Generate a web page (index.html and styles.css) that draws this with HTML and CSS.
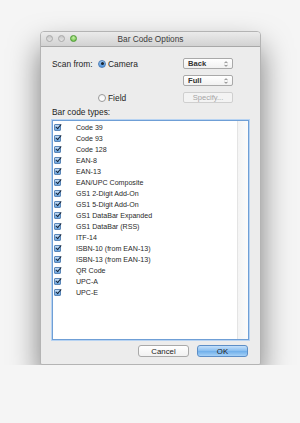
FILE: index.html
```html
<!DOCTYPE html>
<html lang="en">
<head>
    <meta charset="UTF-8">
    <title>Bar Code Options</title>
    <link rel="stylesheet" href="styles.css">
</head>
<body>
    <div class="window">
        <div class="titlebar">
            <div class="lights">
                <span class="light"></span>
                <span class="light"></span>
                <span class="light green"></span>
            </div>
            <div class="title">Bar Code Options</div>
        </div>

        <div class="content">
            <div class="scan-grid">
                <div class="label">Scan from:</div>
                <div class="radio-opt"><span class="radio on"></span>Camera</div>
                <div class="popup">Back
                    <svg class="arrows" width="4" height="6" viewBox="0 0 4 6"><path d="M0.5 2.2 L2 0.7 L3.5 2.2 M0.5 3.8 L2 5.3 L3.5 3.8" fill="none" stroke="#555" stroke-width="0.8"/></svg>
                </div>

                <div></div>
                <div></div>
                <div class="popup">Full
                    <svg class="arrows" width="4" height="6" viewBox="0 0 4 6"><path d="M0.5 2.2 L2 0.7 L3.5 2.2 M0.5 3.8 L2 5.3 L3.5 3.8" fill="none" stroke="#555" stroke-width="0.8"/></svg>
                </div>

                <div></div>
                <div class="radio-opt"><span class="radio"></span>Field</div>
                <div class="button disabled">Specify...</div>
            </div>

            <div class="label types-label">Bar code types:</div>

            <div class="list">
                <div class="items" id="items"></div>
                <div class="track"></div>
            </div>

            <div class="footer">
                <div class="button">Cancel</div>
                <div class="button default">OK</div>
            </div>
        </div>
    </div>

    <script>
        const types = [
            'Code 39', 'Code 93', 'Code 128', 'EAN-8', 'EAN-13', 'EAN/UPC Composite',
            'GS1 2-Digit Add-On', 'GS1 5-Digit Add-On', 'GS1 DataBar Expanded',
            'GS1 DataBar (RSS)', 'ITF-14', 'ISBN-10 (from EAN-13)', 'ISBN-13 (from EAN-13)',
            'QR Code', 'UPC-A', 'UPC-E'
        ]
        let out = ''
        types.forEach(t => {
            out += `<div class="row"><span class="check"></span><span class="name">${t}</span></div>`
        })
        document.querySelector('#items').innerHTML = out
    </script>
</body>
</html>
```

FILE: styles.css
```css
body {
    margin: 0;
    padding: 31px 0 0 40px;
    background-color: #f5f5f5;
    font-family: "Liberation Sans", Arial, sans-serif;
    color: #1e1e1e;
}
.window {
    width: 221px;
    height: 334px;
    box-sizing: border-box;
    background-color: #ececec;
    border: 1px solid #b4b4b4;
    border-radius: 4px 4px 2px 2px;
    box-shadow: 0 16px 30px rgba(0, 0, 0, 0.5);
    overflow: hidden;
}
.titlebar {
    height: 15px;
    box-sizing: border-box;
    background: linear-gradient(#ebebeb, #d2d2d2);
    border-bottom: 1px solid #a8a8a8;
    position: relative;
    display: flex;
    align-items: center;
    justify-content: center;
}
.lights {
    position: absolute;
    left: 5px;
    top: 3px;
    display: flex;
    gap: 5px;
}
.light {
    width: 7px;
    height: 7px;
    box-sizing: border-box;
    border-radius: 50%;
    background: linear-gradient(#c8c8c8, #e4e4e4);
    border: 1px solid #a9a9a9;
}
.light.green {
    background: radial-gradient(circle at 50% 35%, #c8f0a8, #5cb83a);
    border-color: #4f9a35;
}
.title {
    font-size: 8.3px;
    color: #3c3c3c;
}
.content {
    padding: 11px 11px 0;
}
.scan-grid {
    display: grid;
    grid-template-columns: 46px 85px 50px;
    grid-auto-rows: 11px;
    row-gap: 6px;
    align-items: center;
}
.label {
    font-size: 8.4px;
}
.radio-opt {
    display: flex;
    align-items: center;
    font-size: 8.4px;
}
.radio {
    width: 8px;
    height: 8px;
    box-sizing: border-box;
    border-radius: 50%;
    border: 1px solid #9a9a9a;
    background: linear-gradient(#f4f4f4, #ffffff);
    margin-right: 2px;
    display: flex;
    align-items: center;
    justify-content: center;
}
.radio.on {
    border-color: #4f7fb6;
    background: linear-gradient(#9cc7f1, #4d92dc);
}
.radio.on::after {
    content: "";
    width: 3px;
    height: 3px;
    border-radius: 50%;
    background: #1a2430;
}
.popup, .button {
    height: 11px;
    box-sizing: border-box;
    border: 1px solid #a9a9a9;
    border-radius: 2px;
    background: linear-gradient(#ffffff, #f1f1f1);
    font-size: 7.6px;
    display: flex;
    align-items: center;
}
.popup {
    padding: 0 4px;
    justify-content: space-between;
    font-weight: bold;
    color: #333;
}
.button {
    justify-content: center;
    color: #222;
}
.button.disabled {
    color: #a4a4a4;
    border-color: #cfcfcf;
    background: #f3f3f3;
}
.types-label {
    margin: 4px 0 3px;
    height: 10px;
    line-height: 10px;
}
.list {
    height: 220px;
    box-sizing: border-box;
    border: 1px solid #6f9fd6;
    box-shadow: 0 0 0 1px #b7d3f2;
    background-color: #ffffff;
    display: flex;
}
.items {
    flex: 1;
    padding-top: 1px;
}
.track {
    width: 10px;
    border-left: 1px solid #e4e4e4;
    background: linear-gradient(90deg, #f4f4f4, #fbfbfb);
}
.row {
    height: 11px;
    display: flex;
    align-items: center;
    padding-left: 1px;
}
.check {
    width: 7px;
    height: 7px;
    box-sizing: border-box;
    border: 1px solid #5a86b8;
    border-radius: 1px;
    background: linear-gradient(#c4ddf6, #6aa5df);
    position: relative;
}
.check::after {
    content: "";
    position: absolute;
    left: 2px;
    top: -2px;
    width: 2px;
    height: 5px;
    border-right: 1.5px solid #16263c;
    border-bottom: 1.5px solid #16263c;
    transform: rotate(40deg);
}
.name {
    margin-left: 15px;
    font-size: 7.1px;
    color: #2a2a2a;
}
.footer {
    display: flex;
    justify-content: flex-end;
    gap: 8px;
    margin-top: 5px;
    padding-right: 1px;
}
.footer .button {
    width: 51px;
    height: 12px;
    border-radius: 3px;
    font-size: 7.8px;
}
.button.default {
    border-color: #5d8ec6;
    background: linear-gradient(#c5e0fa, #86bdf0 50%, #6eaeea 51%, #a6d1f7);
}
```
